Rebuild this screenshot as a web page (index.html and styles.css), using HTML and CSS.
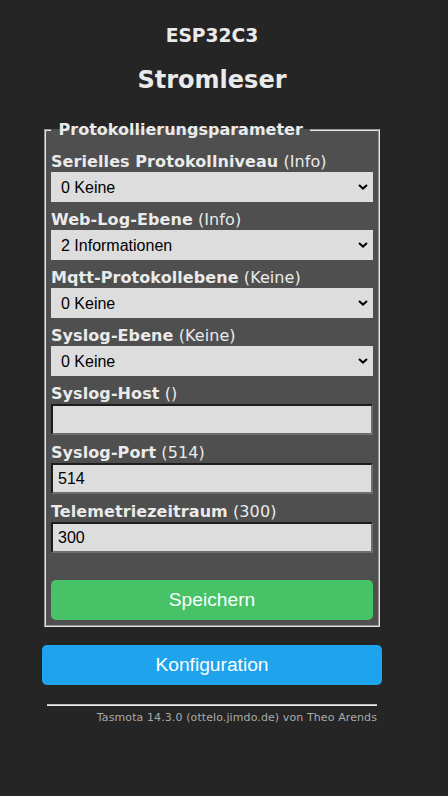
FILE: index.html
```html
<!DOCTYPE html>
<html lang="de">
<head>
<meta charset="utf-8">
<title>Stromleser - Logging</title>
<link rel="stylesheet" href="styles.css">
</head>
<body>
<div class="main">
  <header class="head">
    <h3 class="dev">ESP32C3</h3>
    <h2 class="name">Stromleser</h2>
  </header>

  <fieldset class="box">
    <legend class="legend">&nbsp;Protokollierungsparameter&nbsp;</legend>
    <form class="form" method="get" action="lg">
      <div class="field">
        <label class="lbl" for="l1"><b>Serielles Protokollniveau</b> (Info)</label>
        <div class="selwrap">
          <select id="l1" class="sel">
            <option selected>0 Keine</option>
            <option>1 Fehler</option>
            <option>2 Informationen</option>
            <option>3 Debug</option>
            <option>4 Mehr Debug</option>
          </select>
          <svg class="chev" width="10" height="6" viewBox="0 0 10 6"><polyline points="1,1 5,4.6 9,1" fill="none" stroke="#000" stroke-width="2"/></svg>
        </div>
      </div>
      <div class="field">
        <label class="lbl" for="l2"><b>Web-Log-Ebene</b> (Info)</label>
        <div class="selwrap">
          <select id="l2" class="sel">
            <option>0 Keine</option>
            <option>1 Fehler</option>
            <option selected>2 Informationen</option>
            <option>3 Debug</option>
            <option>4 Mehr Debug</option>
          </select>
          <svg class="chev" width="10" height="6" viewBox="0 0 10 6"><polyline points="1,1 5,4.6 9,1" fill="none" stroke="#000" stroke-width="2"/></svg>
        </div>
      </div>
      <div class="field">
        <label class="lbl" for="l3"><b>Mqtt-Protokollebene</b> (Keine)</label>
        <div class="selwrap">
          <select id="l3" class="sel">
            <option selected>0 Keine</option>
            <option>1 Fehler</option>
            <option>2 Informationen</option>
            <option>3 Debug</option>
            <option>4 Mehr Debug</option>
          </select>
          <svg class="chev" width="10" height="6" viewBox="0 0 10 6"><polyline points="1,1 5,4.6 9,1" fill="none" stroke="#000" stroke-width="2"/></svg>
        </div>
      </div>
      <div class="field">
        <label class="lbl" for="l4"><b>Syslog-Ebene</b> (Keine)</label>
        <div class="selwrap">
          <select id="l4" class="sel">
            <option selected>0 Keine</option>
            <option>1 Fehler</option>
            <option>2 Informationen</option>
            <option>3 Debug</option>
            <option>4 Mehr Debug</option>
          </select>
          <svg class="chev" width="10" height="6" viewBox="0 0 10 6"><polyline points="1,1 5,4.6 9,1" fill="none" stroke="#000" stroke-width="2"/></svg>
        </div>
      </div>
      <div class="field">
        <label class="lbl" for="lh"><b>Syslog-Host</b> ()</label>
        <input id="lh" class="inp" placeholder="" value="">
      </div>
      <div class="field">
        <label class="lbl" for="lp"><b>Syslog-Port</b> (514)</label>
        <input id="lp" class="inp" placeholder="514" value="514">
      </div>
      <div class="field">
        <label class="lbl" for="lt"><b>Telemetriezeitraum</b> (300)</label>
        <input id="lt" class="inp" placeholder="300" value="300">
      </div>
      <button name="save" type="submit" class="btn bgrn">Speichern</button>
    </form>
  </fieldset>

  <form class="nav" action="cn" method="get">
    <button class="btn">Konfiguration</button>
  </form>

  <div class="foot">
    <hr class="rule">
    <a class="credit" href="#">Tasmota 14.3.0 (ottelo.jimdo.de) von Theo Arends</a>
  </div>
</div>
</body>
</html>
```

FILE: styles.css
```css
html, body {
  background: #252525;
}
body {
  margin: 8px 32px 8px 8px;
  font-family: "DejaVu Sans", Verdana, sans-serif;
  font-size: 16px;
  color: #eaeaea;
}
.main {
  width: 340px;
  margin: 0 auto;
  padding: 5px;
}
.head {
  text-align: center;
  color: #eaeaea;
}
.dev {
  margin: 12px 0 0;
  font-size: 18.72px;
  line-height: 22px;
  font-weight: bold;
}
.name {
  margin: 19px 0 0;
  font-size: 24px;
  line-height: 28px;
  font-weight: bold;
}
.box {
  margin: 26px 2px 0;
  padding: 5px;
  background: #4f4f4f;
  border: 2px groove #e6e6e6;
  min-width: 0;
}
.legend {
  padding: 0 2px;
  font-weight: bold;
  font-size: 16px;
  line-height: 19px;
  color: #eaeaea;
}
.form {
  margin: 0;
}
.field {
  margin: 8px 0;
}
.lbl {
  display: block;
  line-height: 20px;
  white-space: nowrap;
  letter-spacing: 0.08px;
}
.selwrap {
  position: relative;
}
.sel {
  display: block;
  width: 100%;
  height: 30px;
  margin: 0;
  padding: 0 10px;
  border: 0;
  border-radius: 0;
  -webkit-appearance: none;
  appearance: none;
  background: #dddddd;
  color: #000;
  font-family: "Liberation Sans", Arial, sans-serif;
  font-size: 16px;
}
.chev {
  position: absolute;
  right: 5px;
  top: 12px;
  pointer-events: none;
}
.inp {
  display: block;
  width: 100%;
  height: 31px;
  margin: 0;
  padding: 0 5px;
  box-sizing: border-box;
  border-style: solid;
  border-width: 2px;
  border-color: #1c1c1c #6e6e6e #6e6e6e #1c1c1c;
  background: #dddddd;
  color: #000;
  font-family: "Liberation Sans", Arial, sans-serif;
  font-size: 16px;
  outline: none;
}
.btn {
  display: block;
  width: 100%;
  height: 40px;
  margin: 0;
  padding: 0 6px;
  border: 0;
  border-radius: 4.8px;
  background: #1fa3ec;
  color: #faffff;
  font-family: "Liberation Sans", Arial, sans-serif;
  font-size: 19.2px;
  line-height: 40px;
  cursor: pointer;
}
.bgrn {
  margin-top: 27px;
  background: #47c266;
}
.nav {
  margin: 18px 0 0;
}
.foot {
  margin-top: 8px;
  padding: 5px;
  text-align: right;
  font-size: 11px;
}
.rule {
  margin: 5.5px 0;
  height: 0;
  border: 0;
  border-top: 1px solid #bdbdbd;
  border-bottom: 1px solid #ececec;
}
.credit {
  color: #aaa;
  text-decoration: none;
  line-height: 13px;
  letter-spacing: 0.1px;
}
```
